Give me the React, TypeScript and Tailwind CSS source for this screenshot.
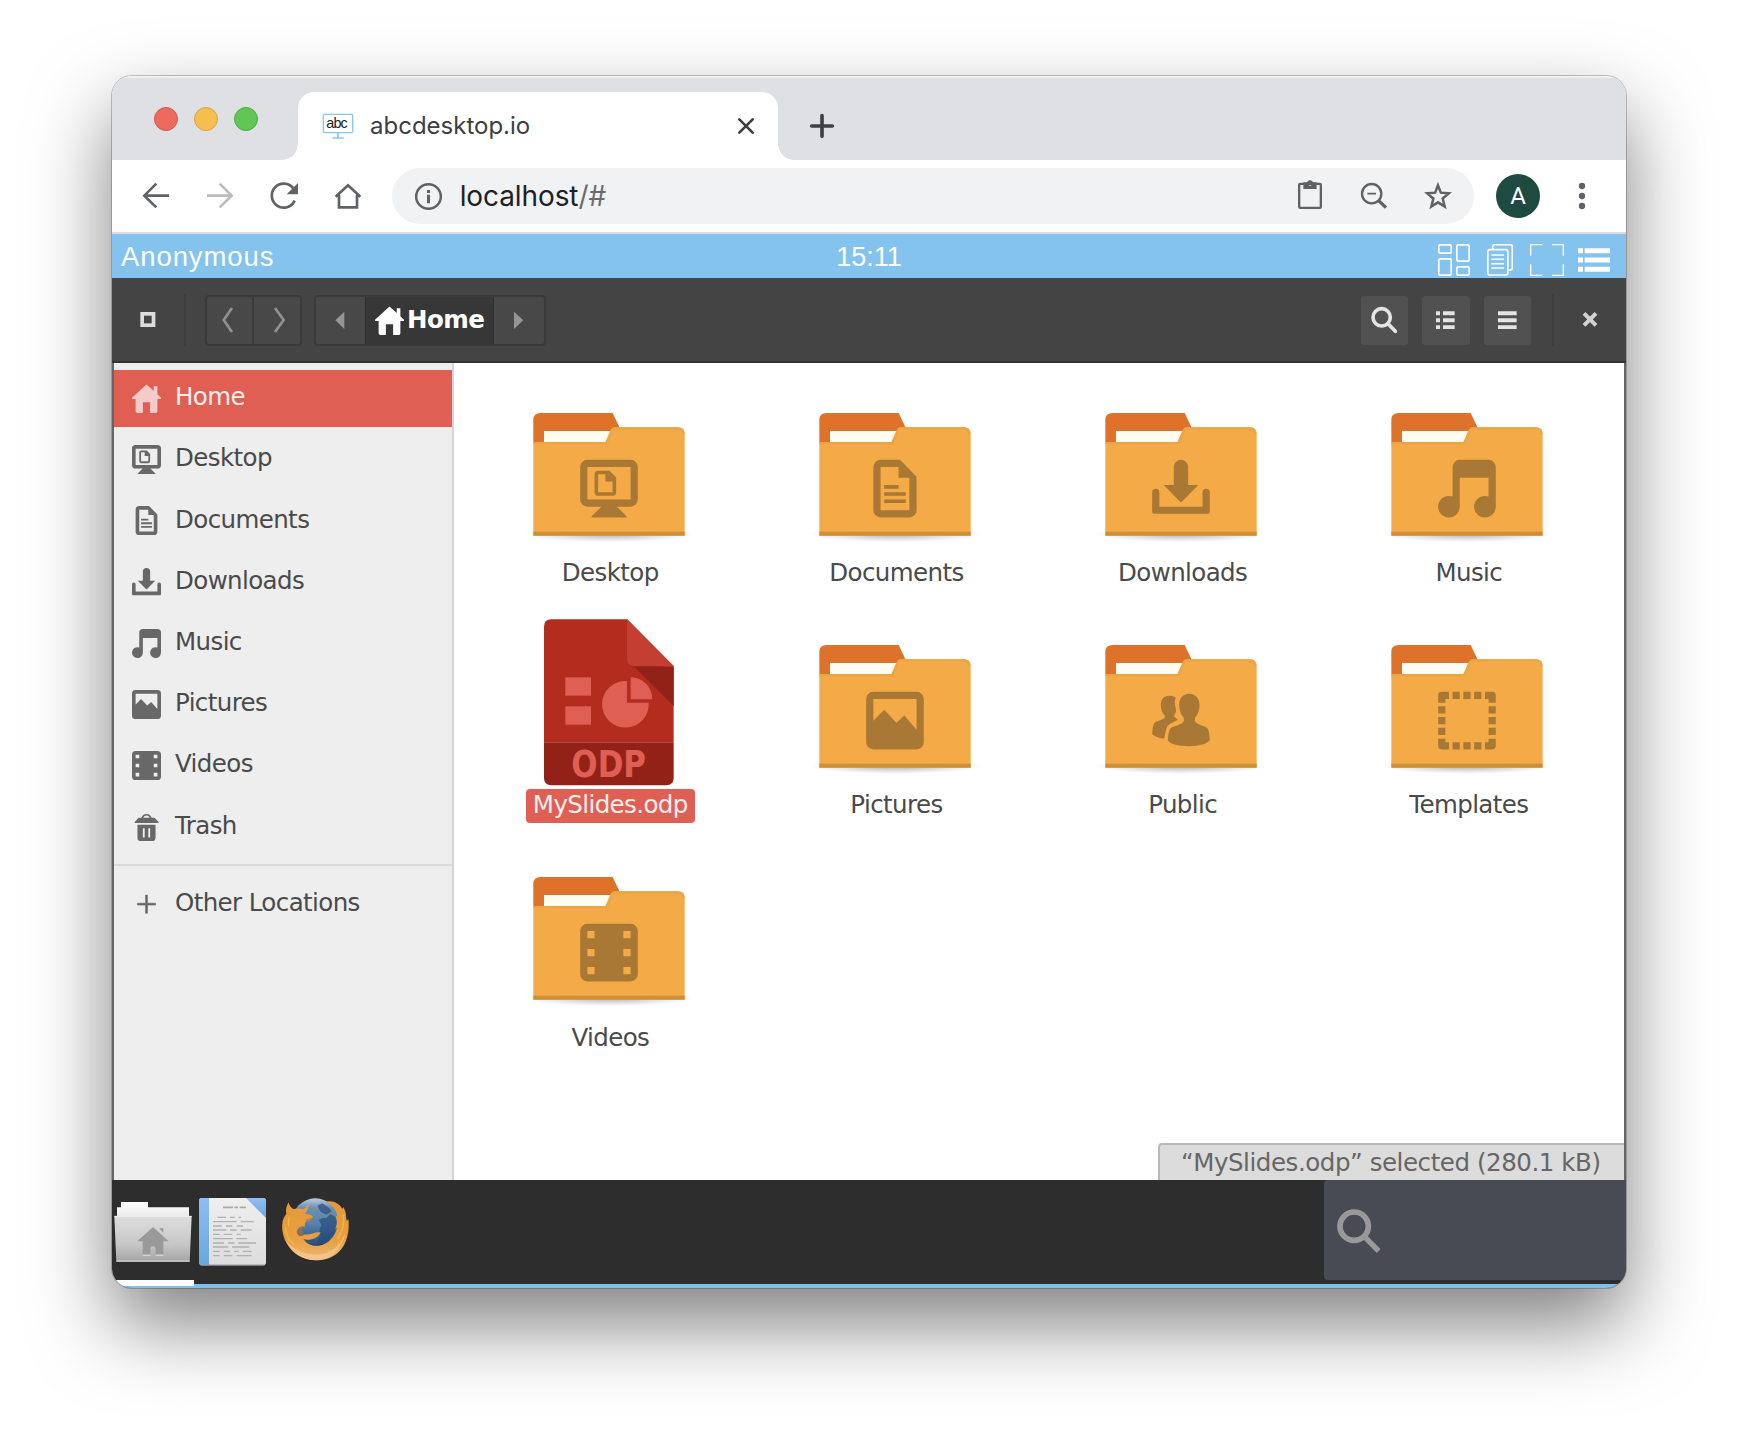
import React from "react";

type IconName =
  | "home" | "desktop" | "documents" | "downloads" | "music" | "pictures"
  | "videos" | "trash" | "plus" | "public" | "templates";

/* Vector art drawn on a fine grid: three units per CSS pixel. */
function Art({ x, y, w, h, className = "", children }: {
  x: number; y: number; w: number; h: number; className?: string; children: React.ReactNode;
}) {
  return (
    <svg width={w / 3} height={h / 3} viewBox={`${x} ${y} ${w} ${h}`} fill="none" className={"block shrink-0 " + className}>
      {children}
    </svg>
  );
}

/* Symbolic glyphs on a 16 unit grid, painted with currentColor. */
function Glyph({ name }: { name: IconName }) {
  switch (name) {
    case "home":
      return <path fill="currentColor" d="M8 .3 0 7.6v.7h2V15q0 1 1 1h3v-6h4v6h3q1 0 1-1V8.300h2v-.7l-2-2V1.200h-2v2.600Z" />;
    case "desktop":
      return (
        <g fill="currentColor" fillRule="evenodd">
          <path d="M2 0h12a2 2 0 0 1 2 2v9a2 2 0 0 1-2 2h-3.800L12.900 15.700V16H3.200v-.3L5.900 13H2a2 2 0 0 1-2-2V2a2 2 0 0 1 2-2ZM2 2v9h12V2Z" />
          <path d="M5 3h3.200L10 4.900V9a1 1 0 0 1-1 1H5a1 1 0 0 1-1-1V4a1 1 0 0 1 1-1ZM5 4v5h4V6H7V4Z" />
        </g>
      );
    case "documents":
      return (
        <path fill="currentColor" fillRule="evenodd" d="M4 0h5.400L14 4.700V14a2 2 0 0 1-2 2H4a2 2 0 0 1-2-2V2a2 2 0 0 1 2-2ZM4 2v12h8V5H9V2ZM5 7h4v1H5ZM5 9h6v1H5ZM5 11h6v1H5Z" />
      );
    case "downloads":
      return (
        <path fill="currentColor" d="M6 2a2 2 0 0 1 4 0v5h2.800L8.300 11.600q-.3.3-.6 0L3.200 7H6ZM0 9a1 1 0 0 1 2 0v4h12V9a1 1 0 0 1 2 0v5.500a.5.5 0 0 1-.5.5H.5a.5.5 0 0 1-.5-.5Z" />
      );
    case "music":
      return <path fill="currentColor" d="M6 0h8a2 2 0 0 1 2 2v11a3 3 0 1 1-2-2.800V5H6v8a3 3 0 1 1-2-2.800V2a2 2 0 0 1 2-2Z" />;
    case "pictures":
      return <path fill="currentColor" fillRule="evenodd" d="M2 0h12a2 2 0 0 1 2 2v12a2 2 0 0 1-2 2H2a2 2 0 0 1-2-2V2a2 2 0 0 1 2-2ZM2 2v6L5 5l3.400 3.600 2.200-2L14 10.500V2Z" />;
    case "videos":
      return <path fill="currentColor" fillRule="evenodd" d="M2 0h12a2 2 0 0 1 2 2v12a2 2 0 0 1-2 2H2a2 2 0 0 1-2-2V2a2 2 0 0 1 2-2ZM2 2v2h2V2ZM2 7v2h2V7ZM2 12v2h2v-2ZM12 2v2h2V2ZM12 7v2h2V7ZM12 12v2h2v-2Z" />;
    case "trash":
      return (
        <g fill="currentColor" fillRule="evenodd">
          <path d="M3.600 3.200h1.600a2.900 2.900 0 0 1 5.600 0h1.600L14.700 5.500V6H1.500v-.5ZM6.200 3.200h3.600a1.900 1.900 0 0 0-3.600 0Z" />
          <path d="M3 7h10v7a2 2 0 0 1-2 2H5a2 2 0 0 1-2-2ZM6 9v5h1V9ZM9 9v5h1V9Z" />
        </g>
      );
    case "plus":
      return <path fill="currentColor" d="M7.500 2.800h1v4.500H13v1H8.500v4.500h-1V8.300H3v-1h4.500Z" stroke="currentColor" strokeWidth=".35" />;
    case "public":
      return (
        <g fill="currentColor" transform="scale(.09259) translate(-277 -184)">
          <path d="M388 190c20 0 31 15 31 33 0 17-6 31-14 39v9c2 7 9 9 18 13 14 5 20 7 22 13 3 9 4 20 5 29 0 12-32 21-63 21s-63-7-63-20c1-10 2-22 6-31 4-7 14-9 24-12 9-3 16-6 18-13v-9c-9-9-14-23-14-39 0-18 10-33 30-33Z" />
          <path d="M327 196c9 0 16 2 21 6-6 13-2 23 1 38-1 7-4 10-6 15v4l11 9c-8 6-23 9-31 19-6 10-7 26-10 37-14-1-26-5-36-13 1-12 1-24 6-33 7-7 27-10 32-16v-7c-8-7-12-19-12-31 0-17 9-28 24-28Z" />
        </g>
      );
    case "templates":
      return (
        <path fill="currentColor" d="M1 0h2v2H2v1H0V1a1 1 0 0 1 1-1ZM4 0h2v2H4ZM7 0h2v2H7ZM10 0h2v2h-2ZM13 0h2a1 1 0 0 1 1 1v2h-2V2h-1ZM0 4h2v2H0ZM0 7h2v2H0ZM0 10h2v2H0ZM14 4h2v2h-2ZM14 7h2v2h-2ZM14 10h2v2h-2ZM0 13h2v1h1v2H1a1 1 0 0 1-1-1ZM4 14h2v2H4ZM7 14h2v2H7ZM10 14h2v2h-2ZM14 13h2v2a1 1 0 0 1-1 1h-2v-2h1Z" />
      );
  }
}

function SmallGlyph({ name, className = "" }: { name: IconName; className?: string }) {
  return (
    <svg width="29" height="29" viewBox="0 0 16 16" className={"block shrink-0 " + className}>
      <Glyph name={name} />
    </svg>
  );
}

function Folder({ name }: { name: IconName }) {
  return (
    <Art x={57} y={-40} w={540} h={540}>
      <ellipse cx="327" cy="431" rx="255" ry="24" fill="url(#ground)" />
      <path d="M100 156V88q0-20 22-20H338L359 112V156Z" fill="#df722a" />
      <path d="M132 122H334L326 156H132Z" fill="#fffdf0" />
      <path d="M100 155H316L332 119Q335 111 344 111H534Q554 111 554 133V436H100Z" fill="#f4aa47" />
      <path d="M100 158.500H320L336 122Q338 114.500 346 114.500H533Q550 114.500 551 132" stroke="#eaa544" strokeWidth="7" />
      <rect x="100" y="424" width="454" height="12" fill="#cc9039" />
      <g transform="translate(240.500 208.500) scale(10.8)" className="text-[#a97834]">
        <Glyph name={name} />
      </g>
    </Art>
  );
}

function OdpFile() {
  return (
    <Art x={57} y={26} w={540} h={540}>
      <path d="M154 57H382L521 197V426H132V79Q132 57 154 57Z" fill="#b32c1e" />
      <path d="M398 195 521 199V317Z" fill="#922217" />
      <path d="M381 57 521 198H403Q381 196 381 176Z" fill="#c53e32" />
      <path d="M132 426H521V533Q521 555 499 555H154Q132 555 132 533Z" fill="#922217" />
      <g fill="#e05f54">
        <rect x="196" y="231" width="77" height="55" />
        <rect x="196" y="318" width="77" height="55" />
        <path d="M381 242V307H446A70 70 0 1 1 381 242Z" />
        <path d="M392 231A65 65 0 0 1 457 297H392Z" />
      </g>
      <text x="214" y="531" textLength="224" lengthAdjust="spacingAndGlyphs" fill="#e05f54" className="font-['DejaVu_Sans',sans-serif] font-bold text-[113px]">ODP</text>
    </Art>
  );
}

const places: { icon: IconName; label: string }[] = [
  { icon: "desktop", label: "Desktop" },
  { icon: "documents", label: "Documents" },
  { icon: "downloads", label: "Downloads" },
  { icon: "music", label: "Music" },
  { icon: "pictures", label: "Pictures" },
  { icon: "videos", label: "Videos" },
  { icon: "trash", label: "Trash" },
];

const files: { icon: IconName | "odp"; label: string }[] = [
  { icon: "desktop", label: "Desktop" },
  { icon: "documents", label: "Documents" },
  { icon: "downloads", label: "Downloads" },
  { icon: "music", label: "Music" },
  { icon: "odp", label: "MySlides.odp" },
  { icon: "pictures", label: "Pictures" },
  { icon: "public", label: "Public" },
  { icon: "templates", label: "Templates" },
  { icon: "videos", label: "Videos" },
];

function TabStrip() {
  return (
    <div className="flex h-[84px] shrink-0 items-end bg-[#dfe0e4] shadow-[inset_0_2px_0_#eff0f2]">
      <div className="flex w-[186px] gap-4 pb-[29px] pl-[42px]">
        <i className="size-6 rounded-full border border-[#d5574c] bg-[#ed6a5f]" />
        <i className="size-6 rounded-full border border-[#dba23c] bg-[#f5bf50]" />
        <i className="size-6 rounded-full border border-[#4eac42] bg-[#62c655]" />
      </div>
      <div className="relative flex h-[68px] w-[480px] items-center rounded-t-2xl bg-white pl-[24px]">
        <span className="absolute bottom-0 -left-4 size-4 bg-[radial-gradient(circle_at_0_0,transparent_15.500px,white_16px)]" />
        <span className="absolute -right-4 bottom-0 size-4 bg-[radial-gradient(circle_at_100%_0,transparent_15.500px,white_16px)]" />
        <Art x={666} y={156} w={96} h={84}>
          <rect x="670" y="163" width="88" height="55" rx="4" stroke="#88c6ee" strokeWidth="4" />
          <path d="M714 219v13M699 234h31" stroke="#88c6ee" strokeWidth="5" strokeLinecap="round" />
          <text x="679" y="205" textLength="64" lengthAdjust="spacing" fill="#222" className="font-['Liberation_Sans',sans-serif] text-[43px]">abc</text>
        </Art>
        <span className="ml-[16px] font-[Inter,sans-serif] text-[24px] text-[#3c4043]">abcdesktop.io</span>
        <Art x={528} y={168} w={60} h={60} className="mr-[22px] ml-auto">
          <path d="m538 178 40 40m0-40-40 40" stroke="#3c4043" strokeWidth="8" strokeLinecap="round" />
        </Art>
      </div>
      <Art x={744} y={156} w={84} h={84} className="mb-5 ml-[30px]">
        <path d="M786 167v62m-31-31h62" stroke="#3c4043" strokeWidth="11" strokeLinecap="round" />
      </Art>
    </div>
  );
}

function Toolbar() {
  return (
    <div className="flex h-[74px] shrink-0 items-center border-b-2 border-[#dadce0] bg-white text-[#5f6368]">
      <Art x={120} y={360} w={96} h={96} className="ml-7">
        <path d="M207 407H136M169 371l-36 36 36 35" stroke="currentColor" strokeWidth="8" />
      </Art>
      <Art x={312} y={360} w={96} h={96} className="ml-8">
        <path d="M321 407H392M359 371l36 36-36 35" stroke="#babcbe" strokeWidth="8" />
      </Art>
      <Art x={504} y={360} w={96} h={96} className="ml-8">
        <path d="M584 422A36 36 0 1 1 580 385" stroke="currentColor" strokeWidth="8" />
        <path d="M594 369v34h-34Z" fill="currentColor" />
      </Art>
      <Art x={696} y={360} w={96} h={96} className="ml-8">
        <path d="M707 410 744 376l37 34M717 404V442h54V404" stroke="currentColor" strokeWidth="8" />
      </Art>
      <div className="ml-[28px] flex h-14 w-[1082px] items-center rounded-full bg-[#f1f2f4] pr-5 pl-5">
        <Art x={936} y={360} w={98} h={98}>
          <circle cx="985.500" cy="409.500" r="37" stroke="#616161" strokeWidth="7.500" />
          <path d="M985.500 404v26M985.500 390v9" stroke="#616161" strokeWidth="9" />
        </Art>
        <span className="ml-[15px] font-[Inter,sans-serif] text-[28px] tracking-[-0.1px] text-[#202124]">
          localhost<span className="text-[#6b6b6b]">/#</span>
        </span>
        <Art x={162} y={360} w={96} h={96} className="ml-auto text-[#616161]">
          <rect x="177.500" y="371.500" width="65" height="72" rx="3" stroke="currentColor" strokeWidth="7" />
          <path fillRule="evenodd" d="M190 387V367h11a9.500 9.500 0 0 1 18 0h11v20ZM210 368a4.500 4.500 0 1 0 .1 9 4.500 4.500 0 0 0 0-9Z" fill="currentColor" />
        </Art>
        <Art x={354} y={360} w={96} h={96} className="ml-8 text-[#616161]">
          <circle cx="395" cy="401" r="29" stroke="currentColor" strokeWidth="7" />
          <path d="M382 401h26" stroke="currentColor" strokeWidth="5" />
          <path d="m415 421 23 22" stroke="currentColor" strokeWidth="10" />
        </Art>
        <Art x={546} y={360} w={96} h={96} className="ml-8 text-[#616161]">
          <path d="M594 376l8.500 22 24 2-18.500 15.500 6 24L594 427l-20 12.500 6-24L561.500 400l24-2Z" stroke="currentColor" strokeWidth="7.500" />
        </Art>
      </div>
      <div className="ml-[22px] flex size-11 items-center justify-center rounded-full bg-[#1f4a40] font-[Roboto,sans-serif] text-[24px] text-white">A</div>
      <Art x={1014} y={360} w={24} h={96} className="ml-[38px] text-[#5f6368]">
        <circle cx="1026" cy="378" r="9.500" fill="currentColor" />
        <circle cx="1026" cy="408" r="9.500" fill="currentColor" />
        <circle cx="1026" cy="438" r="9.500" fill="currentColor" />
      </Art>
    </div>
  );
}

function DesktopBar() {
  return (
    <div className="grid h-11 shrink-0 grid-cols-3 items-center bg-[#83c3ed] font-['Liberation_Sans',sans-serif] text-[27px] text-white">
      <span className="pt-px pl-[9px] text-[27.500px] tracking-[0.9px]">Anonymous</span>
      <span className="pt-[2px] text-center">15:11</span>
      <div className="flex items-center justify-end pt-2 pr-4 text-white">
        <Art x={594} y={552} w={96} h={96}>
          <g stroke="currentColor" strokeWidth="5">
            <rect x="596.500" y="554.500" width="37" height="25" rx="4" />
            <rect x="650.500" y="554.500" width="37" height="49" rx="4" />
            <rect x="596.500" y="596.500" width="37" height="49" rx="4" />
            <rect x="650.500" y="620.500" width="37" height="25" rx="4" />
          </g>
        </Art>
        <Art x={741} y={552} w={78} h={96} className="ml-[17px]">
          <path d="M758 568v-8q0-6 6-6h47q6 0 6 6v64q0 6-6 6h-5" stroke="currentColor" strokeWidth="5" />
          <rect x="743.500" y="569" width="60" height="76" rx="6" stroke="currentColor" strokeWidth="5" />
          <path d="M754 585h38M754 598h38M754 611h38M754 624h38" stroke="currentColor" strokeWidth="4.500" />
        </Art>
        <Art x={870} y={552} w={102} h={96} className="ml-[17px]">
          <path d="M872 587V554h35M936 554h34v33M970 613v33h-34M907 646h-35v-33" stroke="currentColor" strokeWidth="4" />
        </Art>
        <Art x={1014} y={552} w={96} h={96} className="ml-[14px]">
          <path d="M1014 572h15M1034 572h76M1014 600h15M1034 600h76M1014 628h15M1034 628h76" stroke="currentColor" strokeWidth="15" />
        </Art>
      </div>
    </div>
  );
}

function HeaderBar() {
  return (
    <div className="flex h-[85px] shrink-0 items-center border-b-2 border-[#333] bg-[#444] pt-px">
      <Art x={120} y={754} w={48} h={48} className="ml-[28px]">
        <rect x="126.500" y="759.500" width="34" height="34" stroke="#ddd" strokeWidth="11" />
      </Art>
      <i className="ml-[28px] h-[52px] w-[2px] bg-[#3e3e3e]" />
      <div className="ml-[19px] flex h-[51px] w-[97px] rounded-[4px] border-2 border-[#3a3a3a] bg-[#484848]">
        <div className="flex w-[47px] items-center justify-center border-r-2 border-[#3a3a3a] pr-[4px]">
          <Art x={360} y={736} w={45} h={84}>
            <path d="m396 742-25 36 25 36" stroke="#919191" strokeWidth="8" />
          </Art>
        </div>
        <div className="flex flex-1 items-center justify-center pl-[5px]">
          <Art x={518} y={736} w={45} h={84}>
            <path d="m527 742 26 36-26 36" stroke="#919191" strokeWidth="8" />
          </Art>
        </div>
      </div>
      <div className="ml-3 flex h-[51px] w-[232px] overflow-hidden rounded-[4px] border-2 border-[#3a3a3a] bg-[#484848]">
        <div className="flex w-[49px] items-center justify-center pr-[2px]">
          <Art x={702} y={750} w={36} h={56}>
            <path d="M733 752v52l-27-26Z" fill="#959595" />
          </Art>
        </div>
        <div className="flex w-[129px] items-center border-x border-[#303030] bg-[#373737] pl-[9px] text-white">
          <SmallGlyph name="home" />
          <span className="ml-[3px] font-['DejaVu_Sans',sans-serif] text-[24.500px] leading-none font-bold tracking-[-0.500px]">Home</span>
        </div>
        <div className="flex flex-1 items-center justify-center">
          <Art x={1242} y={750} w={36} h={56}>
            <path d="M1245 752v52l28-26Z" fill="#959595" />
          </Art>
        </div>
      </div>
      <div className="ml-auto flex gap-[14px]">
        <div className="flex h-[49px] w-[47.500px] items-center justify-center rounded-[3px] bg-[#515151]">
          <Art x={392} y={736} w={84} h={84}>
            <circle cx="427" cy="770" r="26" stroke="#e4e4e4" strokeWidth="11" />
            <path d="m446 789 22 23" stroke="#e4e4e4" strokeWidth="11" strokeLinecap="round" />
          </Art>
        </div>
        <div className="flex h-[49px] w-[47.500px] items-center justify-center rounded-[3px] bg-[#515151]">
          <Art x={590} y={750} w={56} h={56}>
            <path d="M590 757h12M611 757h35M590 778h12M611 778h35M590 799h12M611 799h35" stroke="#e4e4e4" strokeWidth="12" />
          </Art>
        </div>
        <div className="flex h-[49px] w-[47.500px] items-center justify-center rounded-[3px] bg-[#515151]">
          <Art x={774} y={750} w={56} h={56}>
            <path d="M774 757h56M774 778h56M774 799h56" stroke="#e4e4e4" strokeWidth="12" />
          </Art>
        </div>
      </div>
      <i className="ml-[21px] h-[52px] w-[2px] bg-[#3e3e3e]" />
      <Art x={1023} y={751} w={54} h={54} className="mr-[27px] ml-[27px]">
        <path d="m1032 758 36 36m0-36-36 36" stroke="#d2d2d2" strokeWidth="12" />
      </Art>
    </div>
  );
}

function Place({ icon, label, iconClass }: { icon: IconName; label: string; iconClass: string }) {
  return (
    <>
      <SmallGlyph name={icon} className={iconClass} />
      <span className="relative -top-px ml-[14.500px] tracking-[-0.600px]">{label}</span>
    </>
  );
}

function FileManager() {
  return (
    <div className="relative flex min-h-0 flex-1 border-x-2 border-[#666] bg-white font-['DejaVu_Sans',sans-serif] text-[24.500px] text-[#4a4a4a]">
      <nav className="flex w-[340px] shrink-0 flex-col border-r-2 border-[#d4d4d4] bg-[#eee] pt-[6.500px]">
        <div className="mb-[2.100px] flex h-[57.600px] shrink-0 items-center bg-[#e05f53] pl-[17.500px] text-[#fdeeee]">
          <Place icon="home" label="Home" iconClass="text-[#f4cbc9]" />
        </div>
        {places.map((p) => (
          <div key={p.label} className="flex h-[61.200px] shrink-0 items-center pl-[17.500px]">
            <Place icon={p.icon} label={p.label} iconClass="text-[#686868]" />
          </div>
        ))}
        <div className="mt-[6px] border-t-2 border-[#dadada]" />
        <div className="mt-[8px] flex h-[61px] items-center pl-[17.500px]">
          <Place icon="plus" label="Other Locations" iconClass="text-[#686868]" />
        </div>
      </nav>
      <div className="grid auto-rows-[232.200px] grid-cols-[repeat(4,286.200px)] pt-[13.500px] pl-[11.700px]">
        {files.map((f) => (
          <div key={f.label} className="flex flex-col items-center">
            {f.icon === "odp" ? <OdpFile /> : <Folder name={f.icon} />}
            <span
              className={
                "relative left-[1.500px] flex h-[34px] shrink-0 items-center rounded-[4px] px-[7px] tracking-[-0.600px] whitespace-nowrap " +
                (f.icon === "odp" ? "bg-[#e05f54] text-[#fdeeee]" : "")
              }
            >
              {f.label}
            </span>
          </div>
        ))}
      </div>
      <div className="absolute right-0 bottom-0 flex h-[37px] w-[466px] items-center rounded-tl-[4px] border-t-2 border-l-2 border-[#b9b9b9] bg-[#dcdcdc] pt-px pl-[21px] tracking-[-0.440px] whitespace-nowrap text-[#666]">
        “MySlides.odp” selected (280.1 kB)
      </div>
    </div>
  );
}

function Dock() {
  return (
    <div className="relative flex h-[108px] shrink-0 border-b-4 border-[#7cc0ec] bg-[#2d2d2d]">
      <Art x={39} y={150} w={246} h={246} className="mt-[10px] ml-px">
        <path d="M63 186h81v16H267v30H51V202H63Z" fill="url(#paper)" />
        <path d="M43 228H275L269 366H49Z" fill="url(#metal)" />
        <path d="M43 229H275" stroke="#f0f0f0" strokeWidth="3" />
        <path d="M49 363H269" stroke="#d5d5d5" strokeWidth="3" />
        <path d="m159 261 47 43h-16v40H167V327a8 8 0 0 0-16 0v17H128V304H112ZM177 265h13v13Z" fill="#999" />
        <path d="M128 345.500h23m16 0h23" stroke="#e5e5e5" strokeWidth="3" />
      </Art>
      <Art x={285} y={150} w={225} h={246} className="mt-[10px]">
        <rect x="297" y="174" width="201" height="202" rx="9" fill="url(#sheet)" />
        <path d="M306 174h21v202h-21q-9 0-9-9V183q0-9 9-9Z" fill="url(#spine)" />
        <path d="M438 174h51q9 0 9 9v51Z" fill="url(#spine)" />
        <path d="M301 375H494" stroke="#9a9fa5" strokeWidth="3" />
        <path d="M369 202h30m4 0h11m5 0h19" stroke="#aaa" strokeWidth="5" />
        <path d="M352 232h26m12 0h14m12 0h7M339 245h71m12 0h39M339 258h27m12 0h19m13 0h19M339 270h40m11 0h20m12 0h33M339 283h20m12 0h26m13 0h12M339 296h59m11 0h33M339 309h33m12 0h19m12 0h53M339 321h46m11 0h52M339 334h20m12 0h19m12 0h14m12 0h27M339 347h20m12 0h26m13 0h45" stroke="#b1b1b1" strokeWidth="4" />
      </Art>
      <Art x={540} y={150} w={216} h={246} className="mt-[10px] ml-[10px]">
        <ellipse cx="647" cy="273" rx="96" ry="91" fill="#000" opacity=".2" />
        <circle cx="646" cy="246" r="71" fill="url(#globe)" />
        <path d="M657 240Q667 232 679 235L690 222 706 230 712 250 706 266 708 280 694 290 684 306 662 314 650 308 662 288 658 270 664 256ZM652 197l14-7 18 11 12 12-16 11-18-8Z" fill="#214a78" opacity=".65" />
        <path
          d="M566 187C568 197 572 203 580 207 592 204 602 205 609 208 616 204 622 199 625 192 627 205 621 214 614 220 621 225 636 222 639 232 634 240 626 244 617 246 614 250 614 254 614 260 603 257 594 263 590 274 592 288 602 292 614 283 630 287 640 275 662 277 656 290 645 296 634 298 624 301 616 299 610 296 620 312 636 318 655 317 686 314 704 290 712 262L706 266C713 250 711 238 707 228L712 229C709 208 697 196 678 185 700 180 718 190 727 207L730 201C742 222 736 232 741 243L745 236C749 270 743 312 714 338 694 355 670 361 646 361 608 360 576 340 559 308 547 284 543 262 550 234L548 250C549 236 553 228 559 222 556 208 560 197 566 187Z"
          fill="url(#fox)"
        />
        <path d="M614 260C603 257 594 263 590 274 592 288 602 292 614 283 612 278 604 274 606 264ZM617 246C626 244 634 240 639 232L618 238Z" fill="#b8722a" opacity=".6" />
        <path d="M556 300C590 340 640 352 680 338 706 328 724 308 736 278 728 322 698 360 646 361 604 359 574 336 556 300Z" fill="#f6cf9d" opacity=".6" />
        <path d="M557 262q2 35 25 51M729 222q8 42-17 74M568 230q-4 13-2 29" stroke="#f4bf49" strokeWidth="4" opacity=".75" />
      </Art>
      <div className="ml-auto flex h-[100px] w-[302px] items-start rounded-l-[4px] rounded-br-[4px] bg-[#494b54] pt-[28px] pl-[12px]">
        <Art x={618} y={264} w={138} h={138}>
          <circle cx="672.500" cy="318.500" r="42.500" stroke="#999" strokeWidth="17" />
          <path d="m703 350 43 43" stroke="#999" strokeWidth="16" />
        </Art>
      </div>
      <div className="absolute -bottom-[2px] left-0 h-[6px] w-[82px] bg-white" />
    </div>
  );
}

function Paints() {
  return (
    <svg width="0" height="0" className="absolute">
      <defs>
        <radialGradient id="ground">
          <stop offset="0" stopColor="#000" stopOpacity=".32" />
          <stop offset=".6" stopColor="#000" stopOpacity=".12" />
          <stop offset="1" stopColor="#000" stopOpacity="0" />
        </radialGradient>
        <linearGradient id="metal" x2="0" y2="1"><stop stopColor="#dedede" /><stop offset=".6" stopColor="#c8c8c8" /><stop offset="1" stopColor="#a4a4a4" /></linearGradient>
        <linearGradient id="paper" x2="0" y2="1"><stop stopColor="#fff" /><stop offset="1" stopColor="#e8e8e8" /></linearGradient>
        <linearGradient id="sheet" x2="0" y2="1"><stop stopColor="#efefef" /><stop offset="1" stopColor="#dcdcdc" /></linearGradient>
        <linearGradient id="spine" x2="0" y2="1"><stop stopColor="#8fbdf4" /><stop offset="1" stopColor="#67a9dc" /></linearGradient>
        <linearGradient id="globe" x2="0" y2="1"><stop stopColor="#b9cfdf" /><stop offset=".2" stopColor="#7090b1" /><stop offset=".55" stopColor="#587fab" /><stop offset="1" stopColor="#24497d" /></linearGradient>
        <linearGradient id="fox" x2="0" y2="1"><stop stopColor="#e4993a" /><stop offset=".65" stopColor="#e9a03f" /><stop offset="1" stopColor="#eeb878" /></linearGradient>
      </defs>
    </svg>
  );
}

export default function App() {
  return (
    <div className="h-[1436px] w-[1738px] overflow-hidden bg-white pt-[76px] pl-[112px]">
      <Paints />
      <div className="h-[1212px] w-[1514px] rounded-[20px] shadow-[0_0_0_1px_rgba(0,0,0,0.22),0_36px_80px_rgba(0,0,0,0.5)]">
        <div className="flex h-full flex-col overflow-hidden rounded-[20px]">
          <TabStrip />
          <Toolbar />
          <DesktopBar />
          <HeaderBar />
          <FileManager />
          <Dock />
        </div>
      </div>
    </div>
  );
}
